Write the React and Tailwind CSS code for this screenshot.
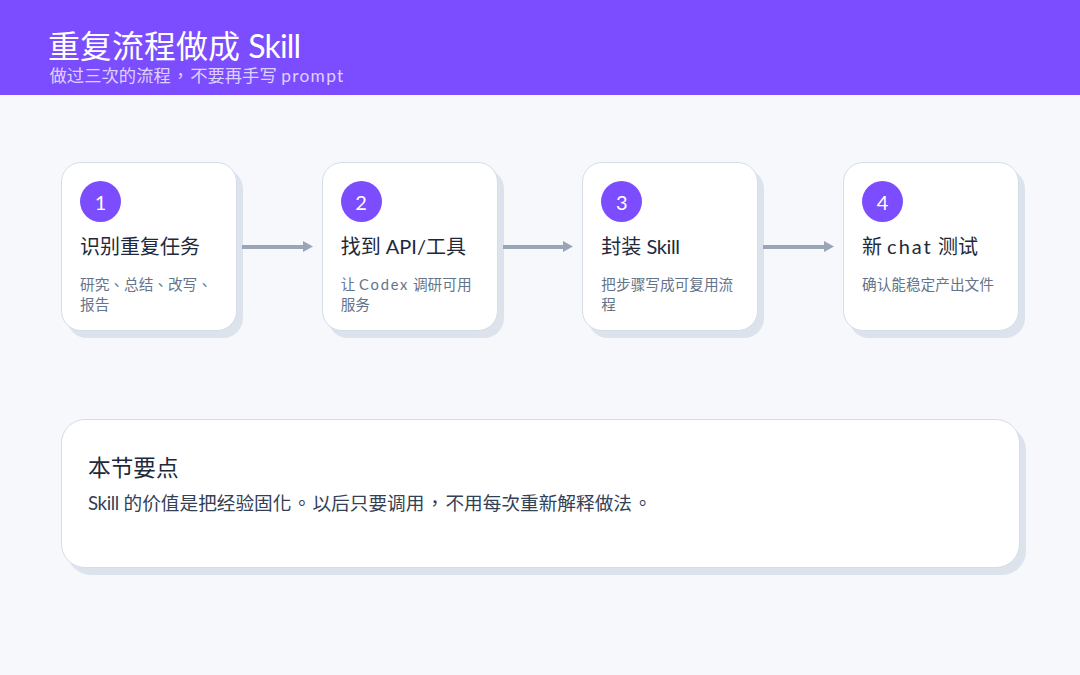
const FONT = "font-['Lato','Noto_Sans_CJK_TC',sans-serif]";

const steps = [
  { n: "1", title: <>识别重复任务</>, desc: <>研究、总结、改写、报告</> },
  { n: "2", title: <>找到 API/工具</>, desc: <>让 <span className="tracking-[1.8px]">Codex</span> 调研可用服务</> },
  { n: "3", title: <>封装 <span className="tracking-[-0.4px]">Skill</span></>, desc: <>把步骤写成可复用流程</> },
  { n: "4", title: <>新 <span className="tracking-[2px]">chat</span> 测试</>, desc: <>确认能稳定产出文件</> },
];

function Arrow() {
  return (
    <div className="flex h-[169px] w-[84.67px] shrink-0 items-center pl-[5px] pr-[9px]">
      <div className="h-[4px] flex-1 bg-[#9aa6b8]" />
      <svg width="10" height="11" viewBox="0 0 10 11" className="shrink-0">
        <path d="M0 0L10 5.5L0 11Z" fill="#9aa6b8" />
      </svg>
    </div>
  );
}

function Card({ n, title, desc }) {
  return (
    <div className="h-[169px] w-[176px] shrink-0 rounded-[20px] border border-[#d5dde8] bg-white pl-[18px] pr-[20px] pt-[18px] shadow-[6px_7px_0_0_#dde3ed]">
      <div className="flex h-[41px] w-[41px] items-center justify-center rounded-full bg-[#7c4dff] text-[20px] leading-none text-white">
        {n}
      </div>
      <div className="mt-[10px] whitespace-nowrap text-[20px] leading-[28px] text-[#1e293b]">{title}</div>
      <div className="mt-[15px] text-[14.67px] leading-[20px] text-[#64748b]">{desc}</div>
    </div>
  );
}

export default function App() {
  return (
    <div className={`${FONT} h-[675px] w-[1080px] overflow-hidden bg-[#f6f8fc]`}>
      <header className="h-[95px] bg-[#7c4dff] pl-[48px] pt-[27px]">
        <div className="text-[32px] leading-[38px] text-white">
          重复流程做成 <span className="tracking-[-0.8px]">Skill</span>
        </div>
        <div className="pl-[1.5px] text-[17.33px] leading-[22px] text-[#ddd2ff]">
          做过三次的流程<span className="mx-[1px]">，</span>不要再手写 <span className="tracking-[1.3px]">prompt</span>
        </div>
      </header>
      <main className="pl-[61px] pt-[67px]">
        <div className="flex items-start">
          {steps.map((s, i) => (
            <div key={s.n} className="flex items-start">
              <Card {...s} />
              {i < steps.length - 1 && <Arrow />}
            </div>
          ))}
        </div>
        <section className="mt-[88px] h-[149px] w-[959px] rounded-[24px] border border-[#d5dde8] bg-white pl-[26px] pt-[33px] shadow-[6px_7px_0_0_#dde3ed]">
          <div className="text-[22.67px] leading-[30px] text-[#1e293b]">本节要点</div>
          <div className="mt-[6px] text-[18.67px] leading-[28px] text-[#334155]">
            <span className="tracking-[-0.4px]">Skill</span> 的价值是把经验固化<span className="mx-[1.2px]">。</span>以后只要调用<span className="mx-[1.2px]">，</span>不用每次重新解释做法<span className="mx-[1.2px]">。</span>
          </div>
        </section>
      </main>
    </div>
  );
}
